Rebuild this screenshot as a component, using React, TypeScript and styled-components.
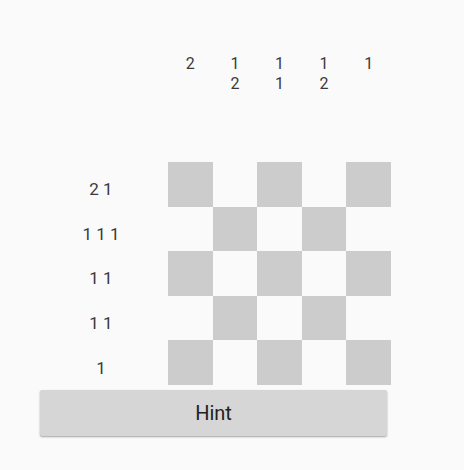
import styled, { createGlobalStyle } from 'styled-components';

const columnClues = [['2'], ['1', '2'], ['1', '1'], ['1', '2'], ['1']];
const rowClues = ['2 1', '1 1 1', '1 1', '1 1', '1'];

// filled cells of the board, row by row
const board = [
  [1, 0, 1, 0, 1],
  [0, 1, 0, 1, 0],
  [1, 0, 1, 0, 1],
  [0, 1, 0, 1, 0],
  [1, 0, 1, 0, 1],
];

const CELL = 44.6;

const GlobalStyle = createGlobalStyle`
  body {
    margin: 0;
    background: #fafafa;
    font-family: Roboto, "Liberation Sans", sans-serif;
  }
`;

export default function App() {
  return (
    <>
      <GlobalStyle />
      <Screen>
        <Header>
          <Spacer />
          {columnClues.map((clue, i) => (
            <ColumnClue key={i}>
              {clue.map((n, j) => (
                <span key={j}>{n}</span>
              ))}
            </ColumnClue>
          ))}
        </Header>
        <Board>
          <RowClues>
            {rowClues.map((clue, i) => (
              <RowClue key={i}>{clue}</RowClue>
            ))}
          </RowClues>
          <Cells>
            {board.flat().map((filled, i) => (
              <Cell key={i} filled={Boolean(filled)} />
            ))}
          </Cells>
        </Board>
        <HintButton>Hint</HintButton>
      </Screen>
    </>
  );
}

const Screen = styled.div`
  width: 464px;
  height: 470px;
  padding: 54px 0 0 40px;
  box-sizing: border-box;
  background: #fafafa;
  color: #3a3a3a;
`;

const Header = styled.div`
  display: flex;
  height: 108px;
`;

const Spacer = styled.div`
  width: 128px;
`;

const ColumnClue = styled.div`
  width: ${CELL}px;
  display: flex;
  flex-direction: column;
  align-items: center;
  font-size: 16px;
  line-height: 20px;
`;

const Board = styled.div`
  display: flex;
`;

const RowClues = styled.div`
  width: 122px;
  margin-right: 6px;
  display: flex;
  flex-direction: column;
`;

const RowClue = styled.div`
  height: ${CELL}px;
  box-sizing: border-box;
  padding-top: 10px;
  display: flex;
  align-items: center;
  justify-content: center;
  font-size: 17px;
`;

const Cells = styled.div`
  display: grid;
  grid-template-columns: repeat(5, ${CELL}px);
  grid-auto-rows: ${CELL}px;
`;

const Cell = styled.div<{ filled: boolean }>`
  background: ${({ filled }) => (filled ? '#cccccc' : 'transparent')};
`;

const HintButton = styled.button`
  display: block;
  margin-top: 5px;
  width: 347px;
  height: 46px;
  border: none;
  border-radius: 2px;
  background: #d6d6d6;
  box-shadow: 0 1px 2px rgba(0, 0, 0, 0.35);
  font-family: Roboto, "Liberation Sans", sans-serif;
  font-size: 20px;
  color: #222;
  padding: 0;
`;
